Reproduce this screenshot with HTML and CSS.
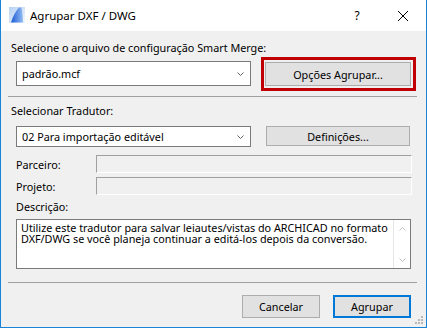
FILE: index.html
```html
<!DOCTYPE html>
<html lang="pt">
<head>
    <meta charset="UTF-8">
    <meta name="viewport" content="width=device-width, initial-scale=1.0">
    <title>Agrupar DXF / DWG</title>
    <link rel="stylesheet" href="styles.css">
</head>
<body>
    <div class="window">
        <div class="titlebar">
            <svg class="app-icon" width="16" height="16" viewBox="0 0 16 16">
                <defs>
                    <linearGradient id="iconBg" x1="0" y1="0" x2="1" y2="1">
                        <stop offset="0" stop-color="#b7d1f2"/>
                        <stop offset="1" stop-color="#f2f7fd"/>
                    </linearGradient>
                    <linearGradient id="iconSail" x1="0" y1="0" x2="1" y2="0">
                        <stop offset="0" stop-color="#1c5bd4"/>
                        <stop offset="1" stop-color="#94bdf1"/>
                    </linearGradient>
                </defs>
                <rect width="16" height="16" fill="url(#iconBg)"/>
                <path d="M2 15.5 C4 9 7 3.5 10 0.5 L12.5 0.5 C13.4 5 13.8 10 14 15.5 Z" fill="url(#iconSail)"/>
            </svg>
            <span class="title">Agrupar DXF / DWG</span>
            <span class="title-button">?</span>
            <span class="title-button">
                <svg width="10" height="10" viewBox="0 0 10 10">
                    <path d="M0 0 L10 10 M10 0 L0 10" stroke="#000" stroke-width="1"/>
                </svg>
            </span>
        </div>

        <div class="content">
            <div class="group-label">Selecione o arquivo de configuração Smart Merge:</div>
            <div class="merge-row">
                <div class="combo combo-tall">
                    <span>padrão.mcf</span>
                    <svg class="chevron" width="7" height="4" viewBox="0 0 7 4">
                        <polyline points="0.5,0.5 3.5,3.5 6.5,0.5" fill="none" stroke="#606060"/>
                    </svg>
                </div>
                <div class="highlight">
                    <button class="btn btn-options">Opções Agrupar...</button>
                </div>
            </div>

            <div class="separator separator-top"></div>

            <div class="group-label label-translator">Selecionar Tradutor:</div>
            <div class="translator-row">
                <div class="combo combo-short">
                    <span>02 Para importação editável</span>
                    <svg class="chevron" width="7" height="4" viewBox="0 0 7 4">
                        <polyline points="0.5,0.5 3.5,3.5 6.5,0.5" fill="none" stroke="#606060"/>
                    </svg>
                </div>
                <button class="btn btn-settings">Definições...</button>
            </div>

            <div class="field-row field-first">
                <span class="field-label">Parceiro:</span>
                <div class="field"></div>
            </div>
            <div class="field-row field-second">
                <span class="field-label">Projeto:</span>
                <div class="field"></div>
            </div>

            <div class="desc-label">Descrição:</div>
            <div class="description">
                <div class="description-text">Utilize este tradutor para salvar leiautes/vistas do ARCHICAD no formato DXF/DWG se você planeja continuar a editá-los depois da conversão.</div>
                <div class="scrollbar">
                    <svg width="7" height="4" viewBox="0 0 7 4">
                        <polyline points="0.5,3.5 3.5,0.5 6.5,3.5" fill="none" stroke="#c2c2c2"/>
                    </svg>
                    <svg width="7" height="4" viewBox="0 0 7 4">
                        <polyline points="0.5,0.5 3.5,3.5 6.5,0.5" fill="none" stroke="#c2c2c2"/>
                    </svg>
                </div>
            </div>

            <div class="separator separator-bottom"></div>

            <div class="footer">
                <button class="btn btn-footer">Cancelar</button>
                <button class="btn btn-footer btn-default">Agrupar</button>
            </div>
        </div>

        <div class="grip">
            <i style="right: 2px; bottom: 8px"></i>
            <i style="right: 5px; bottom: 5px"></i>
            <i style="right: 2px; bottom: 5px"></i>
            <i style="right: 8px; bottom: 2px"></i>
            <i style="right: 5px; bottom: 2px"></i>
            <i style="right: 2px; bottom: 2px"></i>
        </div>
    </div>
</body>
</html>
```

FILE: styles.css
```css
:root {
    --window-border: #1883d7;
    --face: #f0f0f0;
    --button-face: #e1e1e1;
    --button-border: #adadad;
    --combo-border: #7a7a7a;
    --line: #a0a0a0;
    --highlight: #c00000;
    --focus: #0078d7;
}

* {
    margin: 0;
    padding: 0;
    box-sizing: border-box;
}

body {
    font-family: "Noto Sans", "Open Sans", sans-serif;
    font-size: 10.8px;
    line-height: 15px;
    color: #000;
    background-color: #fff;
}

.window {
    position: relative;
    width: 427px;
    height: 328px;
    border: 1px solid var(--window-border);
    border-top: none;
    background-color: var(--face);
    display: flex;
    flex-direction: column;
}

.titlebar {
    height: 31px;
    background-color: #fff;
    display: flex;
    align-items: center;
    flex-shrink: 0;
}

.app-icon {
    margin-left: 8px;
    margin-top: -1px;
}

.title {
    font-size: 11.5px;
    margin-left: 5px;
    flex: 1;
}

.title-button {
    width: 46px;
    height: 31px;
    display: flex;
    align-items: center;
    justify-content: center;
    font-size: 12px;
}

.content {
    display: flex;
    flex-direction: column;
    padding: 9px 9px 0 7px;
}

.group-label {
    padding-left: 3px;
}

.merge-row {
    display: flex;
    align-items: flex-start;
    margin-top: 2px;
    padding-left: 8px;
}

.combo {
    width: 235px;
    background-color: #fff;
    border: 1px solid var(--combo-border);
    display: flex;
    align-items: center;
    justify-content: space-between;
    padding: 0 6px 0 5px;
}

.combo-tall {
    height: 25px;
    margin-top: 4px;
}

.combo-short {
    height: 21px;
}

.chevron {
    margin-top: 1px;
}

.highlight {
    margin-left: 10px;
    border: 3px solid var(--highlight);
    padding: 2px 2px 2px 1px;
}

.btn {
    font-family: inherit;
    font-size: inherit;
    line-height: 15px;
    color: #000;
    background-color: var(--button-face);
    border: 1px solid var(--button-border);
}

.btn-options {
    width: 146px;
    height: 24px;
    display: block;
}

.separator {
    height: 1px;
    background-color: var(--line);
}

.separator-top {
    margin-top: 5px;
}

.label-translator {
    margin-top: 6px;
}

.translator-row {
    display: flex;
    align-items: flex-start;
    margin-top: 8px;
    padding-left: 8px;
}

.btn-settings {
    width: 144px;
    height: 20px;
    margin-left: 15px;
}

.field-row {
    display: flex;
    align-items: center;
    padding-left: 8px;
}

.field-first {
    margin-top: 8px;
}

.field-second {
    margin-top: 4px;
}

.field-label {
    width: 80px;
}

.field {
    width: 316px;
    height: 18px;
    border: 1px solid;
    border-color: var(--line) #fff #fff var(--line);
}

.desc-label {
    margin-top: 4px;
    padding-left: 8px;
}

.description {
    margin: 5px 0 0 8px;
    width: 395px;
    height: 50px;
    background-color: #fff;
    border: 1px solid var(--combo-border);
    display: flex;
}

.description-text {
    flex: 1;
    padding: 2px 4px;
    line-height: 11px;
}

.scrollbar {
    width: 17px;
    border-left: 1px solid #e6e6e6;
    display: flex;
    flex-direction: column;
    align-items: center;
    justify-content: space-between;
    padding: 7px 0 6px;
}

.separator-bottom {
    margin-top: 13px;
}

.footer {
    display: flex;
    justify-content: flex-end;
    gap: 13px;
    margin-top: 12px;
    padding-right: 6px;
}

.btn-footer {
    width: 78px;
    height: 23px;
}

.btn-default {
    border: 2px solid var(--focus);
}

.grip {
    position: absolute;
    right: 1px;
    bottom: 1px;
    width: 10px;
    height: 10px;
}

.grip i {
    position: absolute;
    width: 2px;
    height: 2px;
    background-color: #b8b8b8;
}
```
